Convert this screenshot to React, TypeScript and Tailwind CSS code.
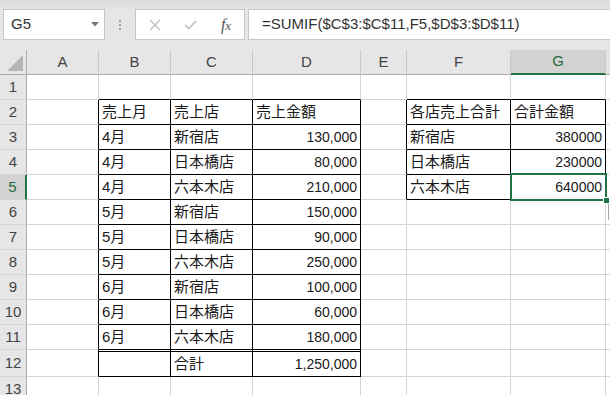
import React from 'react';

type Cell = { v: string; num?: boolean };

const COLS = [
  { id: 'A', w: 'w-[72px]' },
  { id: 'B', w: 'w-[72px]' },
  { id: 'C', w: 'w-[82px]' },
  { id: 'D', w: 'w-[108px]' },
  { id: 'E', w: 'w-[46px]' },
  { id: 'F', w: 'w-[104px]' },
  { id: 'G', w: 'w-[95px]' },
];

const t = (v: string): Cell => ({ v });
const n = (v: string): Cell => ({ v, num: true });

const DATA: Record<number, Record<number, Cell>> = {
  2: { 1: t('売上月'), 2: t('売上店'), 3: t('売上金額'), 5: t('各店売上合計'), 6: t('合計金額') },
  3: { 1: t('4月'), 2: t('新宿店'), 3: n('130,000'), 5: t('新宿店'), 6: n('380000') },
  4: { 1: t('4月'), 2: t('日本橋店'), 3: n('80,000'), 5: t('日本橋店'), 6: n('230000') },
  5: { 1: t('4月'), 2: t('六本木店'), 3: n('210,000'), 5: t('六本木店'), 6: n('640000') },
  6: { 1: t('5月'), 2: t('新宿店'), 3: n('150,000') },
  7: { 1: t('5月'), 2: t('日本橋店'), 3: n('90,000') },
  8: { 1: t('5月'), 2: t('六本木店'), 3: n('250,000') },
  9: { 1: t('6月'), 2: t('新宿店'), 3: n('100,000') },
  10: { 1: t('6月'), 2: t('日本橋店'), 3: n('60,000') },
  11: { 1: t('6月'), 2: t('六本木店'), 3: n('180,000') },
  12: { 2: t('合計'), 3: n('1,250,000') },
};

const inTable = (r: number, c: number) =>
  (r >= 2 && r <= 12 && c >= 1 && c <= 3) || (r >= 2 && r <= 5 && c >= 5 && c <= 6);

const Toolbar = () => (
  <div className="h-[50px] shrink-0 bg-[linear-gradient(#dadada,#e6e6e6_10px)] flex items-start pt-[9px]">
    <div className="ml-[3px] w-[102px] h-[31px] bg-white border border-[#c6c6c6] flex items-center justify-between pl-[7px] pr-[5px]">
      <span className="text-[15px] text-[#333]">G5</span>
      <svg width="8" height="5" viewBox="0 0 8 5">
        <polygon points="0,0 8,0 4,4.5" fill="#777" />
      </svg>
    </div>
    <div className="w-[30px] h-[31px] flex flex-col items-center justify-center gap-[2px]">
      <span className="w-[2px] h-[2px] bg-[#a0a0a0]" />
      <span className="w-[2px] h-[2px] bg-[#a0a0a0]" />
      <span className="w-[2px] h-[2px] bg-[#a0a0a0]" />
    </div>
    <div className="w-[110px] h-[31px] bg-white border border-[#c6c6c6] flex items-center">
      <span className="w-[37px] flex justify-center">
        <svg width="12" height="12" viewBox="0 0 12 12">
          <path d="M1 1L11 11M11 1L1 11" stroke="#c0c0c0" strokeWidth="1.4" />
        </svg>
      </span>
      <span className="w-[35px] flex justify-center">
        <svg width="13" height="10" viewBox="0 0 13 10">
          <path d="M1 5L4.8 8.6L12 1.2" stroke="#c6c6c6" strokeWidth="1.8" fill="none" />
        </svg>
      </span>
      <span className="w-[36px] flex justify-center">
        <span className="font-['Liberation_Serif',serif] italic text-[16px] text-[#555] leading-none">
          f<span className="text-[13px]">x</span>
        </span>
      </span>
    </div>
    <div className="ml-[3px] flex-1 h-[31px] bg-white border border-[#c6c6c6] border-r-0 flex items-center pl-[13px]">
      <span className="text-[15px] text-[#333] whitespace-nowrap">=SUMIF($C$3:$C$11,F5,$D$3:$D$11)</span>
    </div>
  </div>
);

const ColumnHeader = () => (
  <div className="flex h-[25px] shrink-0 bg-[#e6e6e6]">
    <div className="w-[27px] shrink-0 border-r border-b border-[#ababab] relative">
      <svg className="absolute left-0 top-0" width="26" height="24" viewBox="0 0 26 24">
        <polygon points="7,21 23,21 23,5" fill="#b4b4b4" />
      </svg>
    </div>
    {COLS.map((col) => (
      <div
        key={col.id}
        className={`${col.w} shrink-0 flex items-center justify-center text-[15px] border-r border-r-[#c8c8c8] ${
          col.id === 'G'
            ? 'bg-[#d2d2d2] text-[#1e6b41] border-b-2 border-b-[#217346]'
            : 'text-[#444] border-b border-b-[#ababab]'
        }`}
      >
        {col.id}
      </div>
    ))}
    <div className="flex-1 border-b border-[#ababab]" />
  </div>
);

const Row = ({ r }: { r: number }) => {
  const h = r === 12 ? 'h-[27px]' : 'h-[25px]';
  const selected = r === 5;
  return (
    <div className={`flex ${h} shrink-0`}>
      <div
        className={`w-[27px] shrink-0 flex items-center justify-center text-[15px] border-b border-b-[#d4d4d4] ${
          selected
            ? 'bg-[#d2d2d2] text-[#1e6b41] border-r-2 border-r-[#217346]'
            : 'bg-[#e6e6e6] text-[#444] border-r border-r-[#ababab]'
        }`}
      >
        {r}
      </div>
      {COLS.map((col, c) => {
        const cell = DATA[r]?.[c];
        const right = inTable(r, c) || inTable(r, c + 1) ? 'border-r-black' : 'border-r-[#d4d4d4]';
        const bottom = inTable(r, c) || inTable(r + 1, c) ? 'border-b-black' : 'border-b-[#d4d4d4]';
        const doubleTop = r === 12 && inTable(r, c);
        const isSel = r === 5 && c === 6;
        return (
          <div
            key={col.id}
            className={`${col.w} shrink-0 border-r border-b ${right} ${bottom} bg-white flex flex-col ${isSel ? 'relative' : ''}`}
          >
            {doubleTop && <div className="mt-px border-t border-black" />}
            <div
              className={`flex-1 flex items-center px-[3px] text-[#1a1a1a] whitespace-nowrap ${
                cell?.num ? 'justify-end text-[14px]' : 'justify-start text-[15px]'
              }`}
            >
              {cell?.v}
            </div>
            {isSel && (
              <>
                <div className="absolute -left-px -top-[2px] -right-[2px] -bottom-[2px] border-2 border-[#217346] z-10" />
                <div className="absolute -right-[5px] -bottom-[5px] w-[7px] h-[7px] bg-[#217346] border border-white z-20" />
              </>
            )}
          </div>
        );
      })}
      <div className="flex-1 border-b border-b-[#d4d4d4] bg-white relative">
        {r === 6 && (
          <div className="absolute left-[2px] top-[3px] w-[4px] h-[17px] border-l border-t border-[#a8a8a8]" />
        )}
      </div>
    </div>
  );
};

export default function App() {
  const rows = Array.from({ length: 13 }, (_, i) => i + 1);
  return (
    <div className="w-[610px] h-[395px] overflow-hidden flex flex-col bg-white font-['Liberation_Sans','Noto_Sans_CJK_JP',sans-serif]">
      <Toolbar />
      <ColumnHeader />
      {rows.map((r) => (
        <Row key={r} r={r} />
      ))}
    </div>
  );
}
